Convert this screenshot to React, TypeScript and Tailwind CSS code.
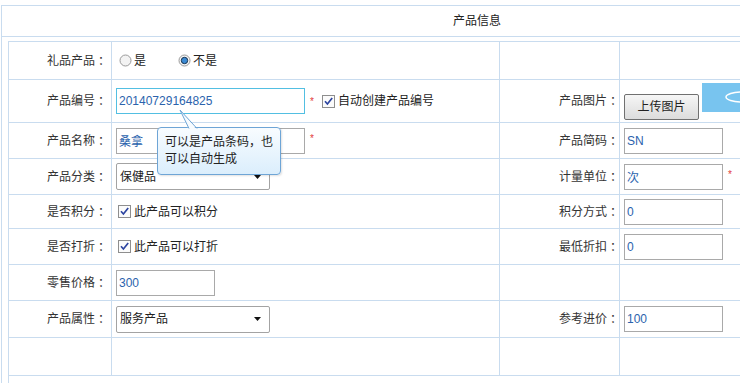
import React from "react";

const line = "border-[#c9dcef]";

function Radio({ checked }: { checked?: boolean }) {
  return (
    <svg width="13" height="13" viewBox="0 0 13 13" className="shrink-0">
      <circle cx="6.5" cy="6.5" r="5.5" fill="#f3f3f3" stroke="#9a9a9a" />
      {checked && <circle cx="6.5" cy="6.5" r="3.2" fill="#3a8ad4" stroke="#17324e" strokeWidth="1" />}
    </svg>
  );
}

function Check() {
  return (
    <svg width="13" height="13" viewBox="0 0 13 13" className="shrink-0">
      <rect x="0.5" y="0.5" width="12" height="12" fill="#fbfbfb" stroke="#8e8e8e" />
      <path d="M3 6.3 L5.4 9 L10.2 3" stroke="#2c44a0" strokeWidth="1.7" fill="none" />
    </svg>
  );
}

function Star() {
  return <span className="text-[10px] leading-none text-[#e23a3a]">*</span>;
}

function Label({ text, side }: { text: string; side?: boolean }) {
  return (
    <span className="flex items-center">
      {text}
      <span className={side ? "ml-[3px] -mr-[3px]" : "ml-[3px]"}>：</span>
    </span>
  );
}

function TextBox({ value, w, focus }: { value: string; w: string; focus?: boolean }) {
  return (
    <input
      defaultValue={value}
      className={`${w} h-[26px] border px-[2px] text-[12px] text-[#2b63ad] outline-none ${
        focus ? "border-[#52bfe2]" : "border-[#a9a9a9]"
      }`}
    />
  );
}

function Select({ value }: { value: string }) {
  return (
    <div className="flex h-[27px] w-[154px] items-center justify-between rounded-[2px] border border-[#a3a3a3] bg-white pl-[3px] pr-[8px] text-[#222]">
      <span>{value}</span>
      <svg width="7" height="4" viewBox="0 0 7 4">
        <path d="M0 0 L7 0 L3.5 4 Z" fill="#111" />
      </svg>
    </div>
  );
}

function Row({ h, label, main, sideLabel, side }: {
  h: string;
  label?: string;
  main?: React.ReactNode;
  sideLabel?: string;
  side?: React.ReactNode;
}) {
  return (
    <div className={`grid grid-cols-[103px_388px_120px_330px] ${h}`}>
      <div className={`flex items-center justify-end border-r border-b pr-[1px] text-[#333] ${line}`}>
        {label && <Label text={label} />}
      </div>
      <div className={`flex items-center border-r border-b pl-[4px] ${line}`}>{main}</div>
      <div className={`flex items-center justify-end border-r border-b text-[#333] ${line}`}>
        {sideLabel && <Label text={sideLabel} side />}
      </div>
      <div className={`flex items-center border-r border-b pl-[4px] ${line}`}>{side}</div>
    </div>
  );
}

export default function App() {
  return (
    <div className="relative h-[383px] w-[740px] overflow-hidden bg-white pl-[1px] pt-[5px] text-[12px] [font-family:'Liberation_Sans','Noto_Sans_CJK_SC',sans-serif]">
      <div className={`w-[951px] border-l border-t ${line}`}>
        <div className={`flex h-[31px] items-center justify-center border-b text-[#222] ${line}`}>产品信息</div>
        <div className="pl-[6px] pt-[4px]">
          <div className={`w-[943px] border-l border-t ${line}`}>
            <Row
              h="h-[38px]"
              label="礼品产品"
              main={
                <div className="flex items-center pl-[3px] text-[#222]">
                  <Radio />
                  <span className="ml-[2px]">是</span>
                  <span className="ml-[32px]"><Radio checked /></span>
                  <span className="ml-[2px]">不是</span>
                </div>
              }
            />
            <div className={`grid h-[43px] grid-cols-[103px_388px_120px_330px]`}>
              <div className={`flex items-center justify-end border-r border-b pr-[1px] text-[#333] ${line}`}>
                <Label text="产品编号" />
              </div>
              <div className={`flex items-center border-r border-b pl-[4px] ${line}`}>
                <TextBox value="20140729164825" w="w-[189px]" focus />
                <span className="ml-[5px]"><Star /></span>
                <span className="ml-[8px]"><Check /></span>
                <span className="ml-[3px] text-[#222]">自动创建产品编号</span>
              </div>
              <div className={`flex items-center justify-end border-r border-b text-[#333] ${line}`}>
                <Label text="产品图片" side />
              </div>
              <div className={`flex items-start border-r border-b pl-[4px] ${line}`}>
                <button className="mt-[14px] h-[26px] w-[75px] rounded-[2px] border border-[#707070] bg-linear-to-b from-[#f6f6f6] to-[#dcdcdc] text-[12px] text-[#222]">
                  上传图片
                </button>
                <div className="ml-[3px] mt-[3px] h-[29px] w-[60px] bg-[#78c4ef]">
                  <svg width="60" height="29" viewBox="0 0 60 29">
                    <ellipse cx="40" cy="14" rx="16" ry="5" fill="none" stroke="#fff" strokeWidth="1.5" />
                  </svg>
                </div>
              </div>
            </div>
            <Row
              h="h-[36px]"
              label="产品名称"
              main={
                <>
                  <TextBox value="桑拿" w="w-[189px]" />
                  <span className="ml-[5px] -mt-[6px]"><Star /></span>
                </>
              }
              sideLabel="产品简码"
              side={<TextBox value="SN" w="w-[99px]" />}
            />
            <Row
              h="h-[36px]"
              label="产品分类"
              main={<Select value="保健品" />}
              sideLabel="计量单位"
              side={
                <>
                  <TextBox value="次" w="w-[99px]" />
                  <span className="ml-[5px] -mt-[6px]"><Star /></span>
                </>
              }
            />
            <Row
              h="h-[34px]"
              label="是否积分"
              main={
                <div className="flex items-center pl-[2px] text-[#222]">
                  <Check />
                  <span className="ml-[3px]">此产品可以积分</span>
                </div>
              }
              sideLabel="积分方式"
              side={<TextBox value="0" w="w-[99px]" />}
            />
            <Row
              h="h-[36px]"
              label="是否打折"
              main={
                <div className="flex items-center pl-[2px] text-[#222]">
                  <Check />
                  <span className="ml-[3px]">此产品可以打折</span>
                </div>
              }
              sideLabel="最低折扣"
              side={<TextBox value="0" w="w-[99px]" />}
            />
            <Row h="h-[36px]" label="零售价格" main={<TextBox value="300" w="w-[99px]" />} />
            <Row
              h="h-[37px]"
              label="产品属性"
              main={<Select value="服务产品" />}
              sideLabel="参考进价"
              side={<TextBox value="100" w="w-[99px]" />}
            />
            <Row h="h-[38px]" />
            <div className={`h-[20px] border-b ${line}`} />
          </div>
        </div>
      </div>

      <div className="absolute left-[157px] top-[127px] h-[48px] w-[124px] rounded-[4px] border border-[#6ea5d6] bg-linear-to-b from-[#f8fcff] to-[#dbeefc] pl-[7px] pt-[6px] leading-[17px] text-[#222] shadow-[1px_1px_2px_rgba(0,0,0,0.12)]">
        <svg className="absolute left-[20px] top-[-19px]" width="22" height="21" viewBox="0 0 22 21">
          <polygon points="2,1 11,21 19,21" fill="#f8fcff" />
          <path d="M11 19.5 L2 1 L19 19.5" fill="none" stroke="#6ea5d6" strokeWidth="1" />
        </svg>
        <div>可以是产品条码，也</div>
        <div>可以自动生成</div>
      </div>
    </div>
  );
}
